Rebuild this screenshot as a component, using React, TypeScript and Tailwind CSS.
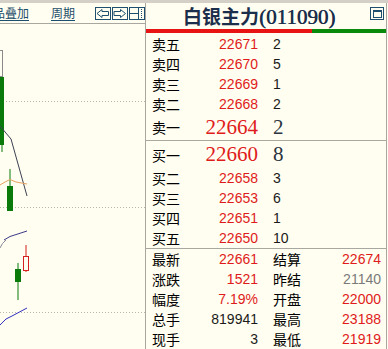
const RED = "text-[#e01b1b]";

function SmallRow({ label, price, qty }: { label: string; price: string; qty: string }) {
  return (
    <div className="flex h-[20px] items-center">
      <div className="flex w-[112px] items-center justify-between pl-[6px]">
        <span className="font-['Noto_Sans_CJK_SC',sans-serif] text-[14px] leading-none text-black">{label}</span>
        <span className={`font-['Liberation_Sans',sans-serif] text-[14px] leading-none ${RED}`}>{price}</span>
      </div>
      <span className="ml-[15px] font-['Liberation_Sans',sans-serif] text-[14px] leading-none text-[#1a1a1a]">{qty}</span>
    </div>
  );
}

function BigRow({ label, price, qty, h }: { label: string; price: string; qty: string; h: string }) {
  return (
    <div className={`flex items-center ${h}`}>
      <div className="flex w-[112px] items-center justify-between pl-[6px]">
        <span className="font-['Noto_Sans_CJK_SC',sans-serif] text-[14px] leading-none text-black">{label}</span>
        <span className={`font-['Liberation_Serif',serif] text-[21px] leading-none ${RED}`}>{price}</span>
      </div>
      <span className="ml-[15px] font-['Liberation_Serif',serif] text-[21px] leading-none text-[#2b3440]">{qty}</span>
    </div>
  );
}

function StatRow({
  l1, v1, c1, l2, v2, c2,
}: { l1: string; v1: string; c1: string; l2: string; v2: string; c2: string }) {
  return (
    <div className="flex h-[20px] items-center">
      <div className="flex w-[112px] items-center justify-between pl-[6px]">
        <span className="font-['Noto_Sans_CJK_SC',sans-serif] text-[14px] leading-none text-black">{l1}</span>
        <span className={`font-['Liberation_Sans',sans-serif] text-[14px] leading-none ${c1}`}>{v1}</span>
      </div>
      <div className="ml-[15px] flex w-[108px] items-center justify-between">
        <span className="font-['Noto_Sans_CJK_SC',sans-serif] text-[14px] leading-none text-black">{l2}</span>
        <span className={`font-['Liberation_Sans',sans-serif] text-[14px] leading-none ${c2}`}>{v2}</span>
      </div>
    </div>
  );
}

function ToolButton({ kind }: { kind: "left" | "right" | "split" }) {
  return (
    <span className="flex h-[13px] w-[16px] items-center justify-center border border-[#1f4f6f] bg-[#fffef0]">
      <svg width="14" height="11" viewBox="0 0 14 11">
        {kind === "left" && (
          <polygon points="1,5.5 6,1.5 6,3.5 12.5,3.5 12.5,7.5 6,7.5 6,9.5" fill="none" stroke="#1f4f6f" strokeWidth="1" />
        )}
        {kind === "right" && (
          <polygon points="12.5,5.5 7.5,1.5 7.5,3.5 1,3.5 1,7.5 7.5,7.5 7.5,9.5" fill="none" stroke="#1f4f6f" strokeWidth="1" />
        )}
        {kind === "split" && (
          <g stroke="#1f4f6f" strokeWidth="1">
            <line x1="0" y1="5.5" x2="8" y2="5.5" />
            <line x1="8.5" y1="0" x2="8.5" y2="11" />
            <line x1="11.5" y1="1" x2="11.5" y2="10" strokeDasharray="1 1" />
          </g>
        )}
      </svg>
    </span>
  );
}

function Chart() {
  return (
    <svg width="145" height="325" viewBox="0 24 145 325" className="block">
      <g stroke="#b9b7a8" strokeWidth="1" strokeDasharray="1 2">
        <line x1="0" y1="101.5" x2="145" y2="101.5" />
        <line x1="0" y1="207.5" x2="145" y2="207.5" />
        <line x1="0" y1="312.5" x2="145" y2="312.5" />
      </g>
      {/* candles */}
      <rect x="-1.5" y="50.5" width="4" height="26" fill="none" stroke="#8a8a8a" />
      <line x1="2" y1="140" x2="2" y2="152" stroke="#0a7a0a" />
      <rect x="-1" y="77" width="5" height="68" fill="#0a7a0a" />
      <line x1="10" y1="169" x2="10" y2="186" stroke="#0a7a0a" />
      <rect x="7" y="186" width="6" height="25" fill="#0a7a0a" />
      <line x1="26" y1="245" x2="26" y2="272" stroke="#d42020" />
      <rect x="23.5" y="256.5" width="5" height="14" fill="#fffef0" stroke="#d42020" />
      <line x1="18" y1="263" x2="18" y2="300" stroke="#0a7a0a" />
      <rect x="15" y="269" width="6" height="13" fill="#0a7a0a" />
      {/* moving averages */}
      <polyline points="0,126 11,139 27,196" fill="none" stroke="#3b4252" strokeWidth="1" />
      <polyline points="0,185 5,182 10,179.5 16,182 27,184" fill="none" stroke="#e8a060" strokeWidth="1" />
      <polyline points="4,240 10,236.5 27,231" fill="none" stroke="#3a3a8a" strokeWidth="1" />
      <path d="M0,248 Q2,243 6,240" fill="none" stroke="#8a8a9a" strokeWidth="1" />
      <polyline points="0,325 6,319 12,316 27,308" fill="none" stroke="#3030c0" strokeWidth="1" />
    </svg>
  );
}

export default function App() {
  return (
    <div className="h-[349px] w-[388px] overflow-hidden border-t-[3px] border-[#d4d0c8] bg-[#fffef0]">
      <div className="flex h-[346px]">
        {/* left chart */}
        <div className="w-[145px] shrink-0">
          <div className="flex h-[21px] items-center border-b border-[#a8a8a0]">
            <span className="ml-[-7px] font-['Noto_Sans_CJK_SC',sans-serif] text-[12px] leading-none text-[#1d4e6b] underline underline-offset-2">
              品叠加
            </span>
            <span className="ml-[22px] font-['Noto_Sans_CJK_SC',sans-serif] text-[12px] leading-none text-[#1d4e6b] underline underline-offset-2">
              周期
            </span>
            <div className="ml-[20px] flex gap-[1px]">
              <ToolButton kind="left" />
              <ToolButton kind="right" />
              <ToolButton kind="split" />
            </div>
          </div>
          <Chart />
        </div>

        {/* right quote panel */}
        <div className="flex w-[242px] shrink-0 flex-col border-x border-[#a8a8a0]">
          <div className="relative h-[26px] pl-[37px] pt-[3px]">
            <span className="font-['Noto_Sans_CJK_SC',sans-serif] text-[19px] font-bold leading-none text-[#1b2e4b]">白银主力</span>
            <span className="font-['Liberation_Serif',serif] text-[21px] leading-none text-[#1b2e4b] [text-shadow:0.6px_0_0_#1b2e4b]">(011090)</span>
            <span className="absolute right-[2px] top-[4px] flex h-[13px] w-[14px] items-center justify-center border border-[#1f4f6f]">
              <span className="h-[8px] w-[9px] border border-t-2 border-[#1f4f6f]" />
            </span>
          </div>
          <div className="flex h-[5px]">
            <div className="w-[166px] bg-[#e81414]" />
            <div className="flex-1 bg-[#0a8a0a]" />
          </div>

          <div className="border-b border-[#a8a8a0] pt-[1px]">
            <SmallRow label="卖五" price="22671" qty="2" />
            <SmallRow label="卖四" price="22670" qty="5" />
            <SmallRow label="卖三" price="22669" qty="1" />
            <SmallRow label="卖二" price="22668" qty="2" />
            <BigRow label="卖一" price="22664" qty="2" h="h-[26px]" />
          </div>

          <div className="border-b border-[#a8a8a0]">
            <BigRow label="买一" price="22660" qty="8" h="h-[27px]" />
            <SmallRow label="买二" price="22658" qty="3" />
            <SmallRow label="买三" price="22653" qty="6" />
            <SmallRow label="买四" price="22651" qty="1" />
            <SmallRow label="买五" price="22650" qty="10" />
          </div>

          <div>
            <StatRow l1="最新" v1="22661" c1={RED} l2="结算" v2="22674" c2={RED} />
            <StatRow l1="涨跌" v1="1521" c1={RED} l2="昨结" v2="21140" c2="text-[#7a7a7a]" />
            <StatRow l1="幅度" v1="7.19%" c1={RED} l2="开盘" v2="22000" c2={RED} />
            <StatRow l1="总手" v1="819941" c1="text-[#1a1a1a]" l2="最高" v2="23188" c2={RED} />
            <StatRow l1="现手" v1="3" c1="text-[#1a1a1a]" l2="最低" v2="21919" c2={RED} />
          </div>
        </div>
      </div>
    </div>
  );
}
